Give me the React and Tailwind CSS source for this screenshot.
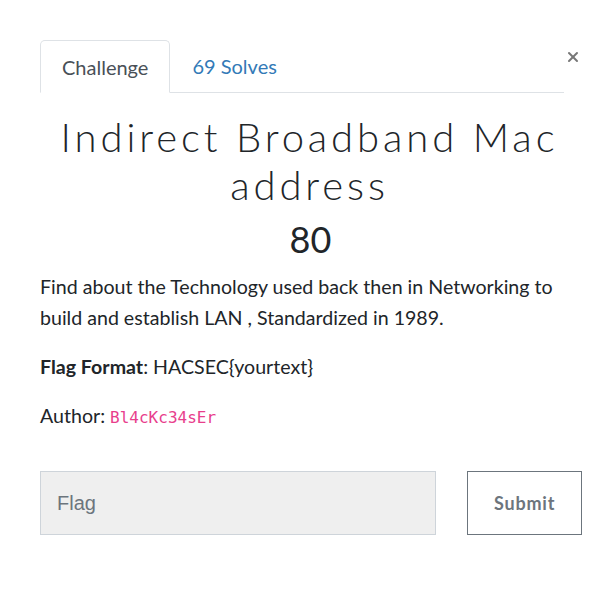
import { X } from "lucide-react";

export default function App() {
  return (
    <div className="w-[616px] h-[595px] bg-white font-['Lato','Liberation_Sans',sans-serif] text-[#212529]">
      <div className="pl-10 pr-[35px] pt-10">
        <div className="flex items-start">
          <div className="flex flex-1 border-b border-[#dee2e6]">
            <div className="-mb-px h-[53px] px-[21px] flex items-center border border-[#dee2e6] border-b-white rounded-t-[5px] text-[20px] text-[#495057]">
              Challenge
            </div>
            <div className="h-[52px] px-[22px] flex items-center text-[20px] text-[#337ab7]">
              69 Solves
            </div>
          </div>
          <button className="mt-[8px] ml-[1px] text-[#777] w-4 flex justify-center">
            <X size={18} strokeWidth={3} />
          </button>
        </div>

        <h2 className="mt-[20px] pr-[2px] text-center text-[40px] leading-[48px] font-light tracking-[3.9px] text-[#212529]">
          Indirect Broadband Mac address
        </h2>
        <div className="mt-[8px] text-center text-[36px] leading-[44px]">80</div>

        <div className="mt-[10px] text-[19.6px] leading-[31px] pr-[10px]">
          <p>
            Find about the Technology used back then in Networking to build and
            establish LAN , Standardized in 1989.
          </p>
          <p className="mt-[18px]">
            <span className="font-bold">Flag Format</span>: HACSEC{"{"}yourtext{"}"}
          </p>
          <p className="mt-[18px]">
            Author:{" "}
            <code className="font-['DejaVu_Sans_Mono',monospace] text-[16px] text-[#e83e8c]">Bl4cKc34sEr</code>
          </p>
        </div>

        <div className="mt-[38px] flex gap-[31px] w-[542px]">
          <input
            placeholder="Flag"
            className="w-[397px] h-[64px] bg-[#efefef] border border-[#ced4da] px-4 text-[20px] font-['Liberation_Sans',sans-serif] placeholder:text-[#6c757d] outline-none"
          />
          <button className="w-[115px] h-[64px] border border-[#6c757d] text-[#6c757d] font-bold text-[18px] tracking-[0.8px]">
            Submit
          </button>
        </div>
      </div>
    </div>
  );
}
